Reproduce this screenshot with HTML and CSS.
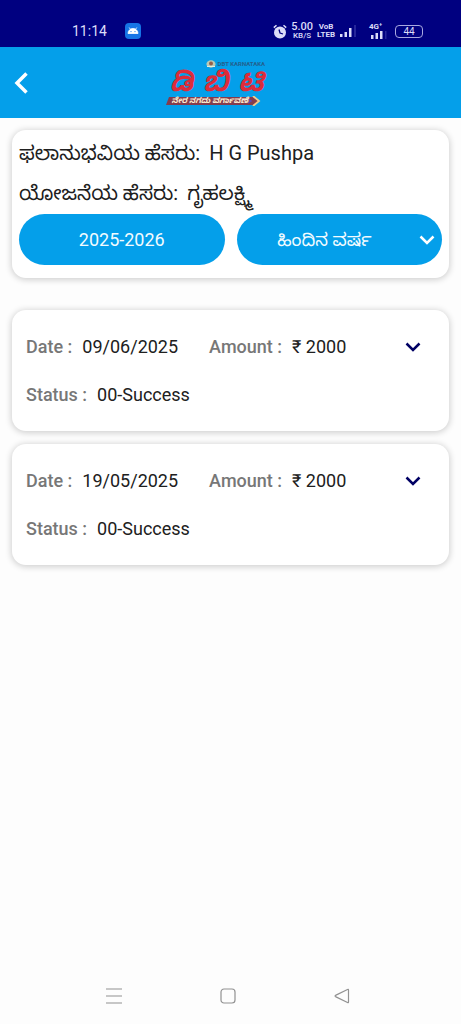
FILE: index.html
```html
<!DOCTYPE html>
<html lang="kn">
<head>
<meta charset="utf-8">
<meta name="viewport" content="width=device-width, initial-scale=1">
<title>DBT Karnataka</title>
<link rel="stylesheet" href="styles.css">
</head>
<body>
<div class="screen">
  <div class="status-bar">
    <span class="clock">11:14</span>
    <svg class="android" viewBox="0 0 16 16" aria-hidden="true">
      <rect width="16" height="16" rx="4" fill="#1674e6"/>
      <path d="M3 10.500a5 5 0 0 1 10 0zM4.200 4.500l1.600 2.300M11.800 4.500l-1.600 2.300" fill="#fff" stroke="#fff" stroke-width=".8"/>
      <circle cx="6" cy="8.600" r=".6" fill="#1674e6"/><circle cx="10" cy="8.600" r=".6" fill="#1674e6"/>
    </svg>
    <div class="indicators">
      <svg class="alarm" viewBox="0 0 14 15" aria-hidden="true">
        <circle cx="7" cy="8.500" r="6" fill="#dcdcf8"/>
        <path d="M.8 3.600L3.500 1.200M13.200 3.600L10.500 1.200" stroke="#dcdcf8" stroke-width="1.500"/>
        <path d="M6 5.500l1 3.500 3 1" fill="none" stroke="#000080" stroke-width="1.300"/>
      </svg>
      <span class="speed"><span>5.00</span><small>KB/S</small></span>
      <span class="volte"><span>VoB</span><span>LTEB</span></span>
      <svg class="signal" viewBox="0 0 18 14" aria-hidden="true">
        <path d="M1 10h2.500v3H1zM5.500 8H8v5H5.500zM10 4h2.500v9H10z" fill="#dcdcf8"/>
        <path d="M15 1h2v12h-2z" fill="#25259a"/>
      </svg>
      <span class="mobile">
        <span>4G⁺</span>
        <svg viewBox="0 0 18 8" aria-hidden="true">
          <path d="M2 4h2.500v4H2zM6.500 2H9v6H6.500zM11 0h2.500v8H11z" fill="#dcdcf8"/>
          <path d="M16 0h1.500v8H16z" fill="#25259a"/>
        </svg>
      </span>
      <span class="battery">44</span>
    </div>
  </div>

  <header class="app-bar">
    <button class="back" type="button" aria-label="Back">
      <svg viewBox="0 0 14 22" aria-hidden="true"><path d="M12.500 1.500L3 11l9.500 9.500" fill="none" stroke="#fff" stroke-width="3.500"/></svg>
    </button>
    <div class="logo">
      <div class="logo-top">
        <svg viewBox="0 0 10 8" aria-hidden="true"><ellipse cx="5" cy="4" rx="4.600" ry="3.700" fill="#b9c9b4"/><circle cx="5" cy="3.600" r="2" fill="#95604c"/><path d="M1 6.500h8" stroke="#e9edda"/></svg>
        <span>DBT KARNATAKA</span>
      </div>
      <div class="logo-name"><span>ಡಿ</span><span>ಬಿ</span><span>ಟಿ</span></div>
      <div class="logo-line">
        <svg class="ribbon" viewBox="0 0 96 10" preserveAspectRatio="none" aria-hidden="true">
          <path d="M3 1h84l6 4-6 4H0z" fill="#843c4d"/>
          <path d="M87 0l6 5-6 5" fill="none" stroke="#f4c98a" stroke-width="1.800"/>
          <path d="M82 3l3 2-3 2" fill="none" stroke="#5b4bb4" stroke-width="1.500"/>
        </svg>
        <span>ನೇರ ನಗದು ವರ್ಗಾವಣೆ</span>
      </div>
    </div>
  </header>

  <main class="content">
    <section class="card summary">
      <p>ಫಲಾನುಭವಿಯ ಹೆಸರು: <span class="name">H G Pushpa</span></p>
      <p>ಯೋಜನೆಯ ಹೆಸರು: <span class="name">ಗೃಹಲಕ್ಷ್ಮಿ</span></p>
      <div class="filters">
        <button class="pill" type="button">2025-2026</button>
        <div class="pick">
          <select class="pill" aria-label="ಹಿಂದಿನ ವರ್ಷ"><option>ಹಿಂದಿನ ವರ್ಷ</option></select>
          <svg class="chevron" viewBox="0 0 16 10" aria-hidden="true"><path d="M1.500 1.500L8 8l6.500-6.500"/></svg>
        </div>
      </div>
    </section>

    <section class="payments">
      <article class="card payment">
        <dl class="facts">
          <div class="date"><dt>Date :</dt><dd>09/06/2025</dd></div>
          <div class="amount"><dt>Amount :</dt><dd>₹ 2000</dd></div>
          <div class="status"><dt>Status :</dt><dd>00-Success</dd></div>
        </dl>
        <button class="expand" type="button" aria-label="Show details"><svg class="chevron" viewBox="0 0 16 10" aria-hidden="true"><path d="M1.500 1.500L8 8l6.500-6.500"/></svg></button>
      </article>
      <article class="card payment">
        <dl class="facts">
          <div class="date"><dt>Date :</dt><dd>19/05/2025</dd></div>
          <div class="amount"><dt>Amount :</dt><dd>₹ 2000</dd></div>
          <div class="status"><dt>Status :</dt><dd>00-Success</dd></div>
        </dl>
        <button class="expand" type="button" aria-label="Show details"><svg class="chevron" viewBox="0 0 16 10" aria-hidden="true"><path d="M1.500 1.500L8 8l6.500-6.500"/></svg></button>
      </article>
    </section>
  </main>

  <nav class="system-nav">
    <button type="button" aria-label="Recent apps"><svg viewBox="0 0 16 16" aria-hidden="true"><path d="M0 1h16M0 8h16M0 15h16"/></svg></button>
    <button type="button" aria-label="Home"><svg viewBox="0 0 16 16" aria-hidden="true"><rect x="1" y="1" width="14" height="14" rx="3"/></svg></button>
    <button type="button" aria-label="Back"><svg viewBox="0 0 16 16" aria-hidden="true"><path d="M14.500 2v12q0 1-1 .5L1.500 8.600q-1-.6 0-1.200l12-5.900q1-.5 1 .5z"/></svg></button>
  </nav>
</div>
</body>
</html>
```

FILE: styles.css
```css
* {
  box-sizing: border-box;
}

body {
  margin: 0;
  background: #fdfdfd;
  color: #202020;
  font-family: Roboto, "Noto Sans Kannada", "Noto Sans", sans-serif;
  font-size: 18px;
  line-height: 24px;
}

button,
select {
  padding: 0;
  border: 0;
  background: none;
  color: inherit;
  font: inherit;
}

svg {
  display: block;
}

.screen {
  display: flex;
  flex-direction: column;
  min-height: 100vh;
}

/* Status bar */
.status-bar {
  display: flex;
  align-items: center;
  height: 47px;
  padding: 15px 38px 0 72px;
  background: #000080;
  color: #dcdcf8;
}

.clock {
  font-size: 14px;
  line-height: 16px;
}

.android {
  width: 16px;
  height: 16px;
  margin-left: 18px;
}

.indicators {
  display: flex;
  align-items: center;
  gap: 4px;
  margin-left: auto;
}

.alarm {
  width: 14px;
  height: 15px;
}

.speed,
.volte {
  display: flex;
  flex-direction: column;
  align-items: center;
  font-size: 11px;
  font-weight: 500;
  line-height: 9px;
}

.speed small {
  font-size: 8px;
}

.volte {
  font-size: 8px;
  font-weight: 700;
  line-height: 8px;
}

.signal {
  width: 18px;
  height: 14px;
}

.mobile {
  margin-left: 8px;
  font-size: 8px;
  font-weight: 700;
  line-height: 8px;
}

.mobile span {
  display: block;
}

.mobile svg {
  width: 18px;
  height: 8px;
}

.battery {
  width: 28px;
  margin-left: 4px;
  border: 1px solid #a8a8e0;
  border-radius: 4px;
  font-size: 10px;
  line-height: 11px;
  text-align: center;
}

/* App bar */
.app-bar {
  display: grid;
  grid-template-columns: 1fr auto 1fr;
  align-items: center;
  height: 71px;
  padding: 0 14px;
  background: #049fea;
}

.back svg {
  width: 14px;
  height: 22px;
}

.logo {
  display: flex;
  flex-direction: column;
  width: 100px;
  margin-right: 30px;
  color: #dc2c3a;
}

.logo-top {
  display: flex;
  align-items: center;
  gap: 2px;
  padding-left: 40px;
  color: #23618e;
  font-size: 6px;
  font-weight: 700;
  line-height: 8px;
  white-space: nowrap;
}

.logo-top svg {
  flex: none;
  width: 10px;
  height: 8px;
}

.logo-name {
  display: flex;
  justify-content: space-between;
  padding: 0 2px 0 4px;
  font-size: 28px;
  font-style: italic;
  font-weight: 700;
  line-height: 28px;
}

.logo-line {
  display: grid;
  align-items: center;
  color: #fbe9cf;
  font-size: 8px;
  font-style: italic;
  font-weight: 700;
  line-height: 10px;
}

.logo-line > * {
  grid-area: 1 / 1;
}

.logo-line span {
  padding-left: 6px;
}

.ribbon {
  width: 96px;
  height: 10px;
}

/* Cards */
.content {
  flex: 1;
  padding: 12px 12px 24px;
}

.card {
  border-radius: 14px;
  background: #fff;
  box-shadow: 0 1px 6px 1px rgba(0, 0, 0, 0.18);
}

.summary {
  padding: 3px 7px 13px;
  font-size: 20px;
  line-height: 40px;
}

.summary p {
  margin: 0;
  white-space: nowrap;
}

.name {
  margin-left: 4px;
}

.filters {
  display: grid;
  grid-template-columns: 1fr 1fr;
  gap: 12px;
  margin-top: 1px;
}

.pill {
  width: 100%;
  height: 51px;
  border-radius: 26px;
  background: #049fea;
  color: #f2fbff;
  font-size: 18px;
  text-align: center;
}

.pick {
  display: grid;
  align-items: center;
}

.pick > * {
  grid-area: 1 / 1;
}

.pick .pill {
  appearance: none;
  padding-right: 30px;
  text-align-last: center;
}

.chevron {
  width: 16px;
  height: 10px;
  fill: none;
  stroke: #000064;
  stroke-width: 2.500;
}

.pick .chevron {
  justify-self: end;
  margin-right: 7px;
  stroke: #fff;
  pointer-events: none;
}

.payments {
  display: flex;
  flex-direction: column;
  gap: 13px;
  margin-top: 32px;
}

.payment {
  display: flex;
  align-items: flex-start;
  justify-content: space-between;
  padding: 25px 28px 24px 14px;
}

.facts {
  display: grid;
  grid-template-columns: auto auto;
  gap: 24px 31px;
  margin: 0;
}

.facts div {
  display: flex;
  gap: 10px;
}

.facts dt {
  color: #777;
  font-weight: 500;
}

.facts dd {
  margin: 0;
}

.facts .status {
  grid-column: 1 / -1;
}

.expand {
  display: flex;
  align-items: center;
  height: 24px;
}

/* System navigation */
.system-nav {
  display: flex;
  justify-content: space-between;
  height: 56px;
  padding: 0 111px 0 106px;
}

.system-nav button {
  display: flex;
  align-items: center;
}

.system-nav svg {
  width: 16px;
  height: 16px;
  fill: none;
  stroke: #929292;
  stroke-width: 1.200;
}
```
